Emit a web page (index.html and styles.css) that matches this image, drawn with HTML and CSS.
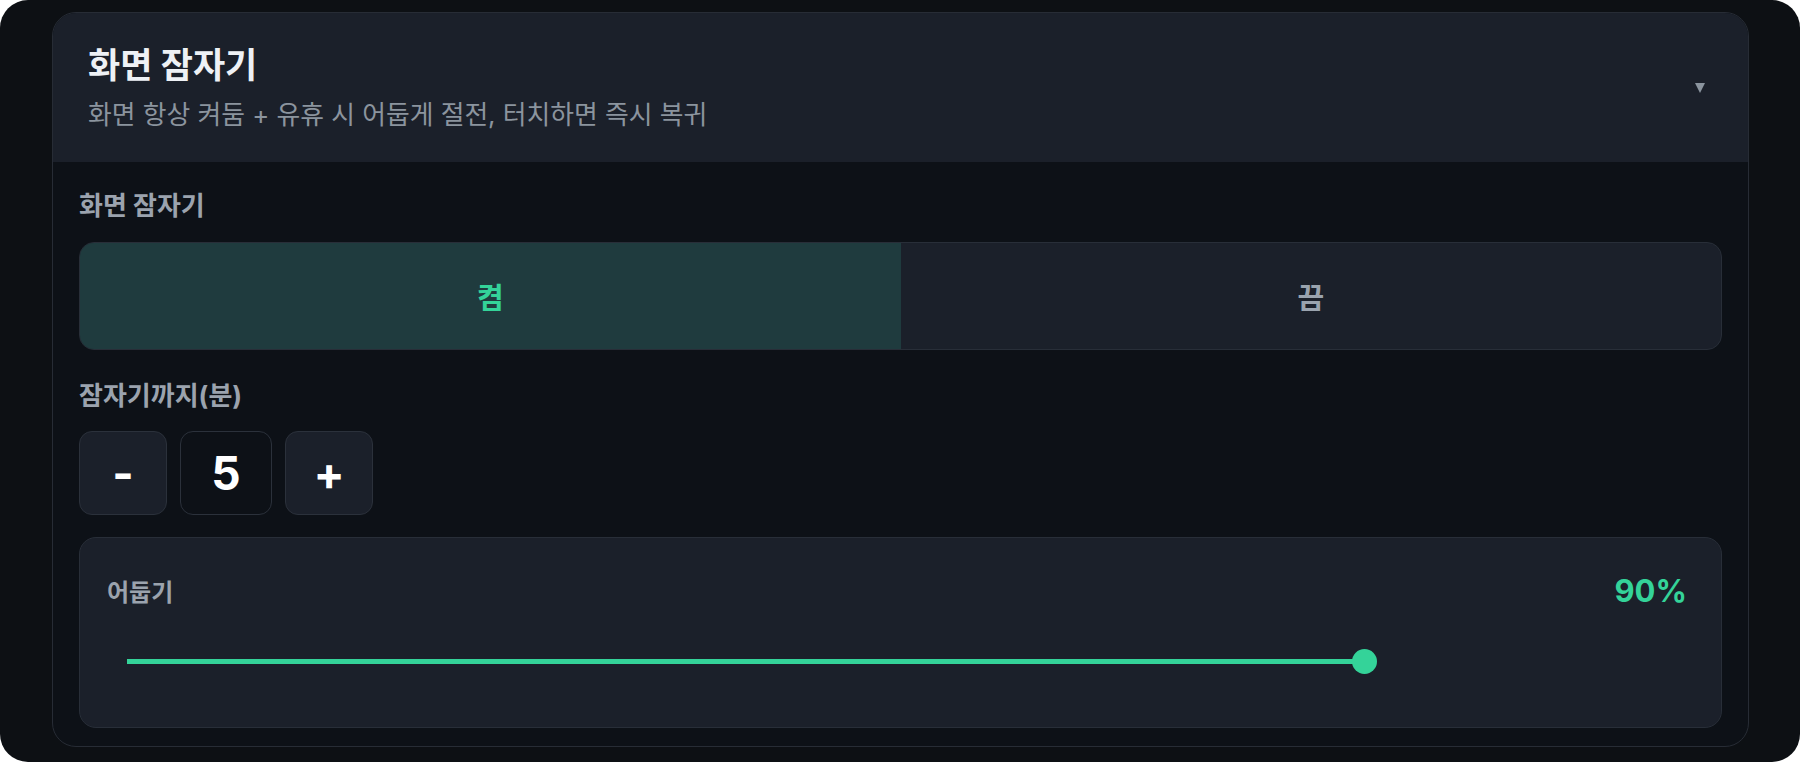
FILE: index.html
```html
<!DOCTYPE html>
<html lang="ko">
<head>
    <meta charset="UTF-8">
    <title>화면 잠자기</title>
    <link rel="stylesheet" href="styles.css">
</head>
<body>
<div class="frame">
    <div class="card">
        <div class="card-head">
            <div>
                <h2 class="title">화면 잠자기</h2>
                <p class="desc">화면 항상 켜둠 + 유휴 시 어둡게 절전, 터치하면 즉시 복귀</p>
            </div>
            <svg class="caret" width="10" height="10" viewBox="0 0 10 10"><polygon points="0,0 10,0 5,10" fill="#8b949e"/></svg>
        </div>
        <div class="card-body">
            <div class="label">화면 잠자기</div>
            <div class="seg">
                <button class="seg-btn on">켬</button>
                <button class="seg-btn">끔</button>
            </div>

            <div class="label">잠자기까지(분)</div>
            <div class="stepper">
                <button class="step-btn">-</button>
                <div class="step-val">5</div>
                <button class="step-btn">+</button>
            </div>

            <div class="dim">
                <div class="dim-row">
                    <span class="dim-name">어둡기</span>
                    <span class="dim-val">90%</span>
                </div>
                <div class="range">
                    <div class="range-fill" style="width:90%"></div>
                    <div class="range-thumb" style="left:90%"></div>
                </div>
            </div>
        </div>
    </div>
</div>
</body>
</html>
```

FILE: styles.css
```css
*{
    margin: 0;
    padding: 0;
    box-sizing: border-box;
}
body{
    background: #fff;
    font-family: Inter, "Noto Sans CJK KR", sans-serif;
}
.frame{
    height: 762px;
    background: #0d1014;
    border-radius: 28px;
    padding: 12px 51px 15px 52px;
}
.card{
    height: 100%;
    background: #0d1117;
    border: 1px solid #272c35;
    border-radius: 24px;
    overflow: hidden;
}
.card-head{
    display: flex;
    align-items: center;
    justify-content: space-between;
    background: #1b202a;
    padding: 31px 43px 30px 35px;
}
.title{
    font-size: 35px;
    line-height: 42px;
    font-weight: 700;
    color: #eef1f5;
}
.desc{
    margin-top: 12px;
    font-size: 25.8px;
    line-height: 34px;
    color: #8b949e;
}
.caret{
    display: block;
}
.card-body{
    padding: 28px 26px 20px 26px;
}
.label{
    font-size: 26px;
    line-height: 32px;
    font-weight: 700;
    color: #9ba3ae;
    margin-bottom: 20px;
}
.seg{
    display: flex;
    height: 108px;
    border: 1px solid #282e38;
    border-radius: 15px;
    overflow: hidden;
    background: #1b202a;
    margin-bottom: 30px;
}
.seg-btn{
    flex: 1;
    border: none;
    background: transparent;
    font-family: inherit;
    font-size: 29px;
    font-weight: 700;
    color: #9aa3ae;
}
.seg-btn.on{
    background: #1f3b3e;
    color: #34d399;
}
.stepper{
    display: flex;
    gap: 13px;
    margin-top: -1px;
    margin-bottom: 22px;
}
.step-btn, .step-val{
    height: 84px;
    border: 1px solid #2b313b;
    border-radius: 13px;
    font-family: Inter, sans-serif;
    font-size: 46px;
    font-weight: 700;
    color: #fff;
    display: flex;
    align-items: center;
    justify-content: center;
}
.step-btn{
    width: 88px;
    background: #1b202a;
}
.step-val{
    width: 92px;
    background: #0d1117;
}
.dim{
    background: #1b202a;
    border: 1px solid #282e38;
    border-radius: 17px;
    padding: 36px 34px 54px 27px;
}
.dim-row{
    display: flex;
    justify-content: space-between;
    align-items: center;
    height: 32px;
}
.dim-name{
    font-size: 24px;
    font-weight: 700;
    color: #9ba3ae;
}
.dim-val{
    font-size: 31px;
    font-weight: 700;
    color: #34d399;
}
.range{
    position: relative;
    width: 1375px;
    height: 24px;
    margin: 43px 0 0 20px;
}
.range-fill{
    position: absolute;
    left: 0;
    top: 10px;
    height: 5px;
    background: #34d399;
}
.range-thumb{
    position: absolute;
    top: 0;
    width: 25px;
    height: 25px;
    margin-left: -13px;
    border-radius: 50%;
    background: #34d399;
}
```
